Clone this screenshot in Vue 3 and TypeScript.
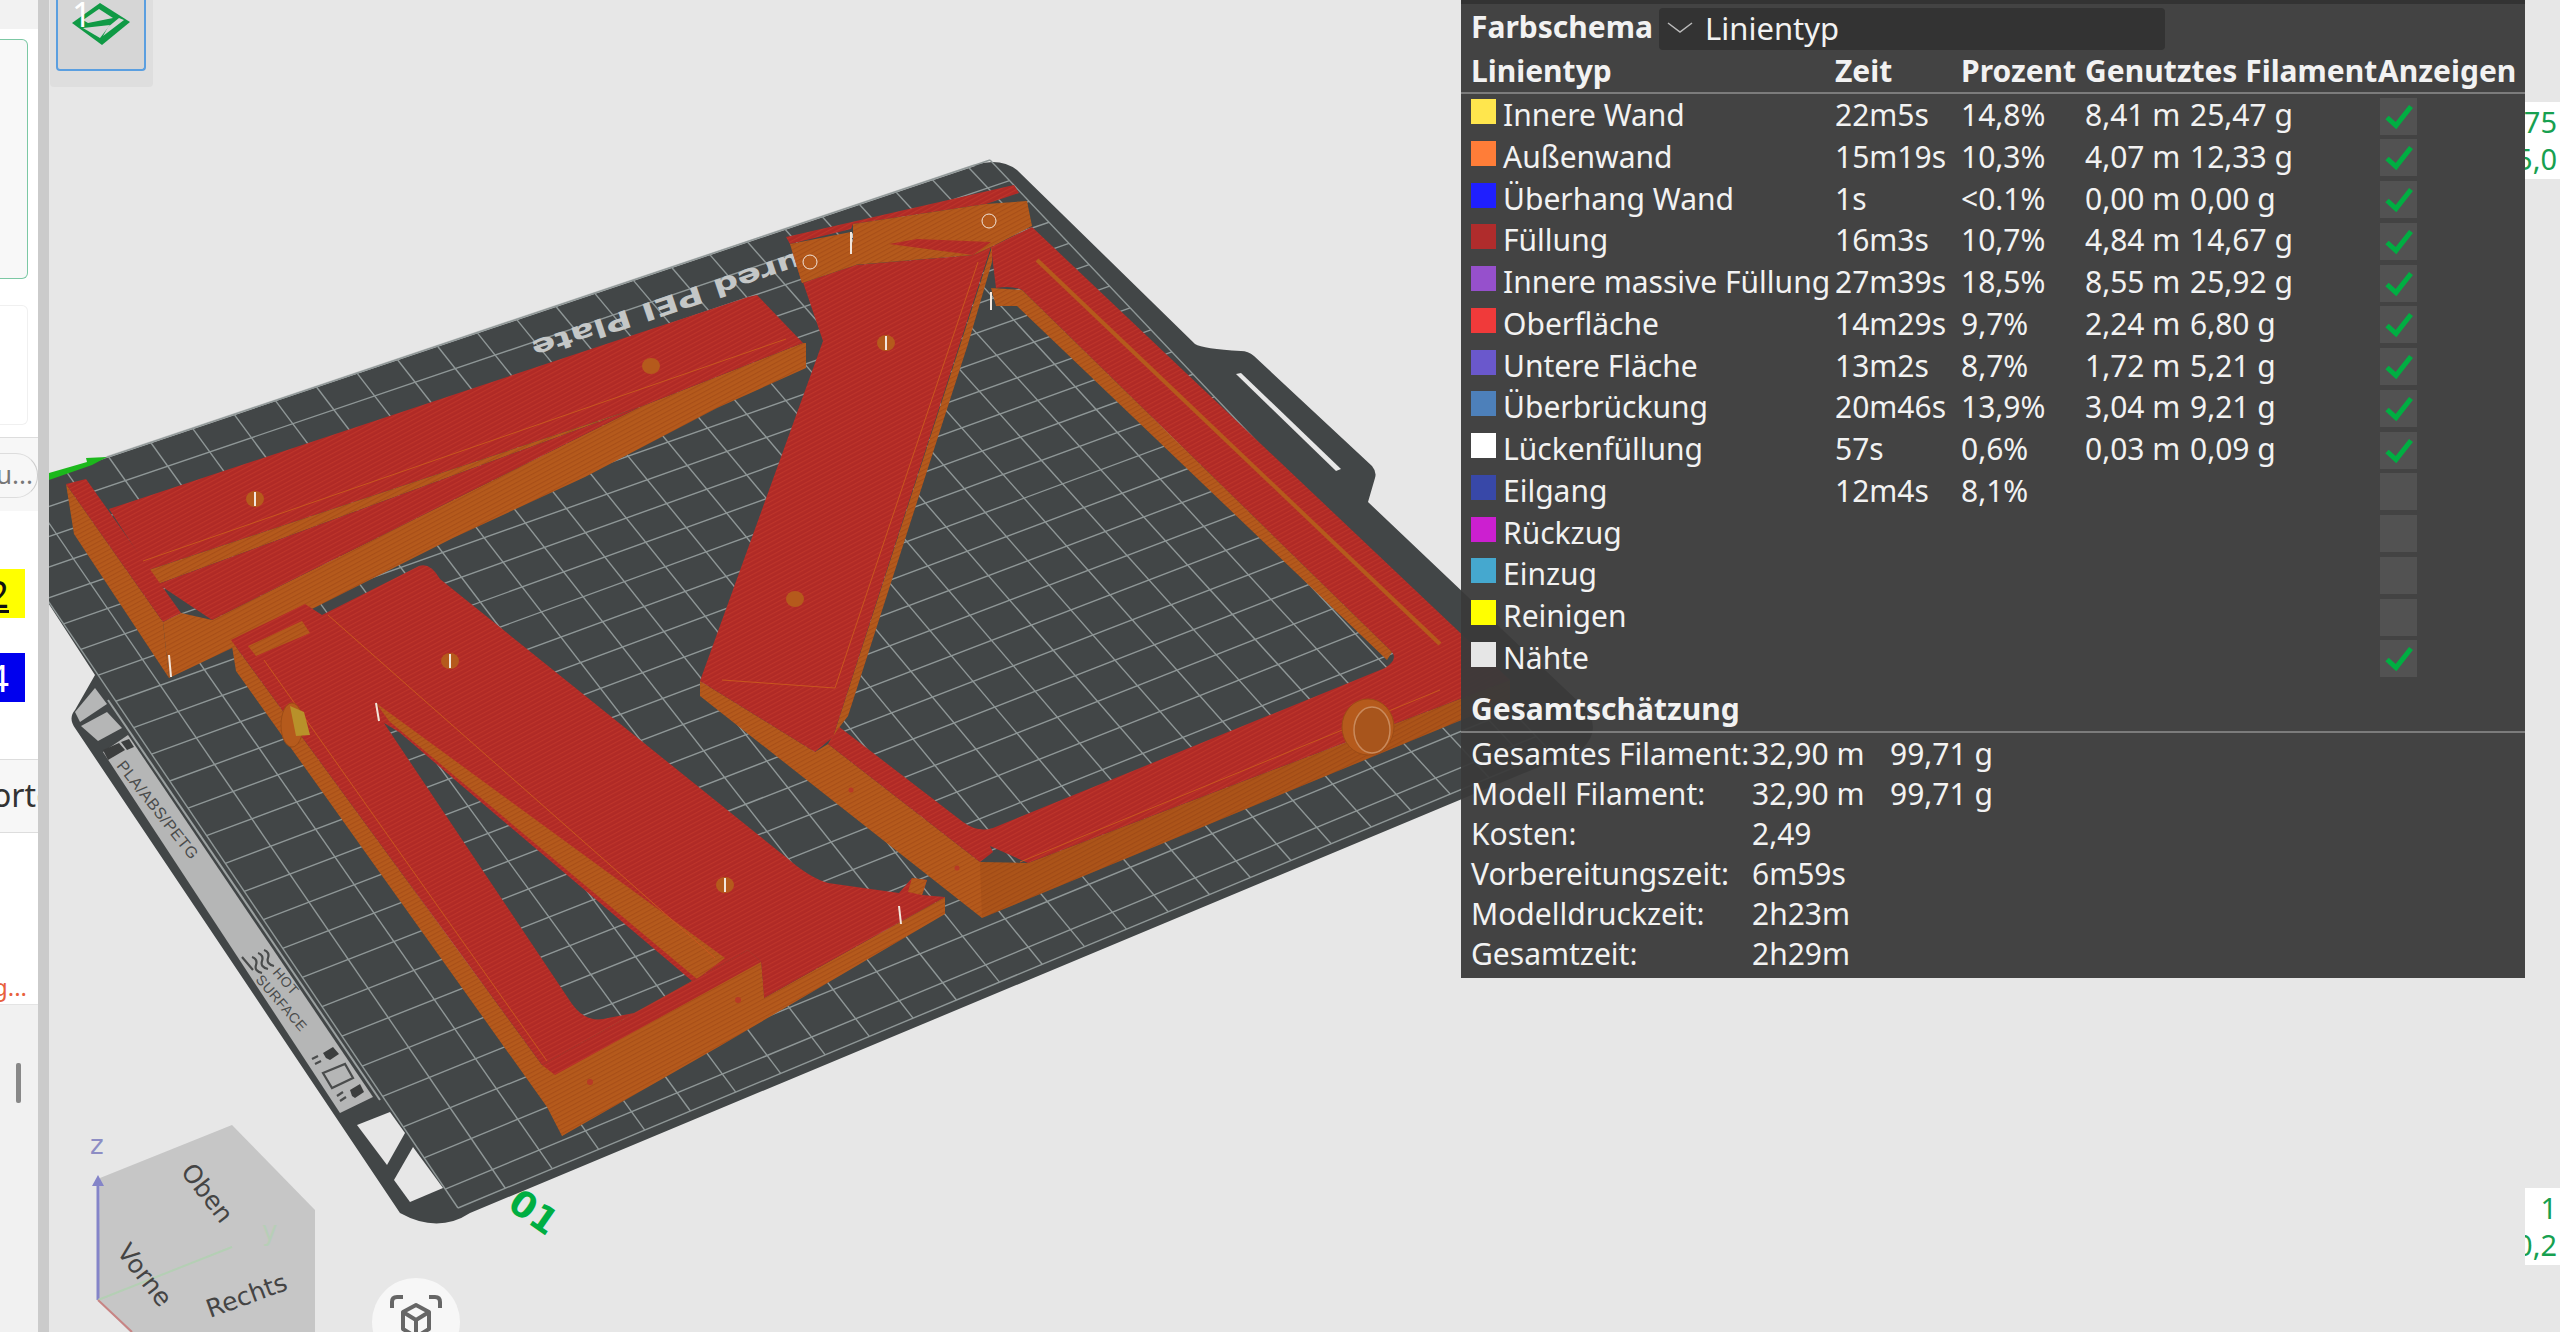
<script setup lang="ts">
type Row = { color: string; name: string; time?: string; pct?: string; len?: string; weight?: string; on: boolean }

const rows: Row[] = [
  { color: '#ffe64d', name: 'Innere Wand', time: '22m5s', pct: '14,8%', len: '8,41 m', weight: '25,47 g', on: true },
  { color: '#ff7d38', name: 'Außenwand', time: '15m19s', pct: '10,3%', len: '4,07 m', weight: '12,33 g', on: true },
  { color: '#1f1fff', name: 'Überhang Wand', time: '1s', pct: '<0.1%', len: '0,00 m', weight: '0,00 g', on: true },
  { color: '#b02c2c', name: 'Füllung', time: '16m3s', pct: '10,7%', len: '4,84 m', weight: '14,67 g', on: true },
  { color: '#9650cc', name: 'Innere massive Füllung', time: '27m39s', pct: '18,5%', len: '8,55 m', weight: '25,92 g', on: true },
  { color: '#f03a3a', name: 'Oberfläche', time: '14m29s', pct: '9,7%', len: '2,24 m', weight: '6,80 g', on: true },
  { color: '#6a58cc', name: 'Untere Fläche', time: '13m2s', pct: '8,7%', len: '1,72 m', weight: '5,21 g', on: true },
  { color: '#4d80ba', name: 'Überbrückung', time: '20m46s', pct: '13,9%', len: '3,04 m', weight: '9,21 g', on: true },
  { color: '#ffffff', name: 'Lückenfüllung', time: '57s', pct: '0,6%', len: '0,03 m', weight: '0,09 g', on: true },
  { color: '#3848a8', name: 'Eilgang', time: '12m4s', pct: '8,1%', on: false },
  { color: '#cc1fd0', name: 'Rückzug', on: false },
  { color: '#45a8cf', name: 'Einzug', on: false },
  { color: '#ffff00', name: 'Reinigen', on: false },
  { color: '#e6e6e6', name: 'Nähte', on: true },
]

const totals = [
  ['Gesamtes Filament:', '32,90 m', '99,71 g'],
  ['Modell Filament:', '32,90 m', '99,71 g'],
  ['Kosten:', '2,49', ''],
  ['Vorbereitungszeit:', '6m59s', ''],
  ['Modelldruckzeit:', '2h23m', ''],
  ['Gesamtzeit:', '2h29m', ''],
]

// bed corners on screen, top-left / top-right / bottom-right / bottom-left
const [x0, y0, x1, y1, x2, y2, x3, y3] = [-20, 500, 990, 160, 1551, 752, 458, 1208]
const den = (x1 - x2) * (y3 - y2) - (x3 - x2) * (y1 - y2)
const g = ((x0 - x1 + x2 - x3) * (y3 - y2) - (x3 - x2) * (y0 - y1 + y2 - y3)) / den
const h = ((x1 - x2) * (y0 - y1 + y2 - y3) - (x0 - x1 + x2 - x3) * (y1 - y2)) / den

function bed(u: number, v: number) {
  const w = g * u + h * v + 1
  return [
    ((x1 - x0 + g * x1) * u + (x3 - x0 + h * x3) * v + x0) / w,
    ((y1 - y0 + g * y1) * u + (y3 - y0 + h * y3) * v + y0) / w,
  ]
}

// 256 mm bed with a 10 mm grid, so the last cell on each axis is cut short
const gridLines: number[][] = []
for (const t of [...Array.from({ length: 26 }, (_, k) => k / 25.6), 1]) {
  gridLines.push([...bed(t, 0), ...bed(t, 1)])
  gridLines.push([...bed(0, t), ...bed(1, t)])
}

const holes = [
  [255, 499, true], [651, 366, false], [886, 343, true], [795, 599, false],
  [450, 661, true], [725, 885, true],
] as [number, number, boolean][]
</script>

<template>
  <div class="page">
    <aside class="side">
      <div class="side-top"></div>
      <div class="card green"></div>
      <div class="card faint"></div>
      <div class="side-tools"><span class="pill">u...</span></div>
      <div class="side-chips">
        <span class="chip yellow"><u>2</u></span>
        <span class="chip blue">4</span>
      </div>
      <div class="side-row">ortg</div>
      <div class="side-warn"><span>g...</span></div>
      <div class="side-foot"><span class="grip"></span></div>
    </aside>
    <div class="split"></div>

    <main class="view">
      <svg class="scene" viewBox="49 0 2511 1332" width="2511" height="1332">
        <defs>
          <pattern id="red" width="4" height="4" patternUnits="userSpaceOnUse" patternTransform="rotate(-28)">
            <rect width="4" height="4" fill="#b02a26" />
            <rect width="4" height="1.2" fill="#bd342a" />
          </pattern>
          <pattern id="org" width="4" height="4" patternUnits="userSpaceOnUse" patternTransform="rotate(-28)">
            <rect width="4" height="4" fill="#b55a1c" />
            <rect width="4" height="1.2" fill="#a84f18" />
          </pattern>
        </defs>

        <path class="plate" d="M30,483 L107,457 L975,165 Q1000,157 1017,170 L1195,344 Q1203,349 1241,351 Q1248,351 1254,356 L1372,466 Q1377,472 1375,478 L1368,502 L1582,705 Q1604,728 1582,749 L470,1213 Q438,1234 400,1213 L75,728 Q68,718 75,710 L95,675 L30,575 Z" />
        <line class="edge" x1="107" y1="457" x2="975" y2="165" />
        <polygon class="bg" points="1236,374 1241,373 1341,469 1336,471" />
        <polygon class="bg" points="357,1125 390,1112 405,1133 387,1165" />
        <polygon class="bg" points="394,1180 413,1147 443,1188 410,1202" />
        <polygon class="strip" points="75,712 95,688 107,704 80,722" />
        <polygon class="strip" points="81,726 107,712 122,728 98,741" />
        <polygon class="strip" points="103,752 128,735 373,1097 340,1113" />
        <line class="strip-line" x1="108" y1="700" x2="380" y2="1100" />

        <line v-for="(l, i) in gridLines" :key="i" class="grid" :x1="l[0]" :y1="l[1]" :x2="l[2]" :y2="l[3]" />

        <g class="print">
          <polygon points="103,750 119,743 125,750 108,760" />
          <polygon points="121,742 129,739 134,747 127,750" />
          <text class="hint" transform="translate(116,766) rotate(51.6)">PLA/ABS/PETG</text>
          <text class="hint small" transform="translate(272,973) rotate(49)">HOT</text>
          <text class="hint small" transform="translate(255,980) rotate(49)">SURFACE</text>
          <path class="hint-line" d="M242,957 L253,970 M252,957 q6,2 4,8 q-2,6 6,8 M258,953 q6,2 4,8 q-2,6 6,8 M264,950 q6,2 4,8 q-2,6 6,8" />
          <polygon points="323,1053 333,1047 339,1054 330,1060 326,1058" />
          <polygon points="350,1090 360,1084 364,1092 355,1098 352,1096" />
          <path class="hint-line" d="M323,1073 L345,1064 L353,1078 L332,1088 Z M312,1059 L318,1056 M315,1064 L321,1061 M337,1096 L343,1092 M340,1101 L346,1097" />
        </g>

        <text class="plate-name" text-anchor="end" transform="translate(530,342) rotate(161.4) scale(1.42,1)">Textured PEI Plate</text>
        <text class="plate-no" transform="translate(506,1208) rotate(35)">01</text>

        <polygon class="axis" points="49,473 87,462 86,458 107,457 92,465 49,480" />

        <!-- upper left bracket -->
        <polygon fill="url(#org)" points="806,343 806,368 717,408 585,477 453,538 316,607 230,649 169,678 163,622 181,613 212,620 640,407 803,343" />
        <polygon fill="url(#red)" points="109,509 748,297 757,295 803,343 640,407 631,410 149,570" />
        <polygon fill="url(#org)" points="631,410 149,570 158,584" />
        <polygon fill="url(#red)" points="631,410 158,584 212,620 640,407" />
        <polygon fill="url(#org)" points="66,484 74,534 169,678 163,622" />
        <polygon fill="url(#red)" points="66,484 86,479 181,613 163,622" />
        <polyline class="seam" points="143,561 786,339" />

        <!-- centre frame -->
        <polygon fill="url(#org)" points="700,681 700,696 982,918 1510,700 1510,680 1028,863 980,862 828,744 815,752" />
        <polygon class="shade" points="980,862 982,918 1510,700 1510,680 1028,863" />
        <path fill="url(#red)" d="M991,247 L1032,227 L1510,680 L1028,863 L990,846 L993,852 L980,862 L828,744 L838,726 L963,822 Q978,833 993,828 L1385,668 Q1398,660 1392,652 L1022,290 Q1012,285 996,288 Z" />
        <polygon fill="url(#org)" points="991,288 1022,290 1392,652 1387,660 1017,306 996,306" />
        <line class="band" x1="1037" y1="260" x2="1440" y2="644" />
        <polygon fill="url(#org)" points="992,247 992,262 968,344 848,716 838,729 828,744 833,737" />
        <polygon fill="url(#red)" points="790,244 802,283 856,265 973,255 991,247 833,737 815,752 700,681 823,341" />
        <polygon fill="url(#red)" points="786,237 1014,185 1019,193 986,204 853,224 851,229 790,244" />
        <polygon fill="url(#org)" points="790,244 851,232 856,265 802,283" />
        <polygon fill="url(#org)" points="853,224 986,204 1027,201 1032,226 991,247 973,255 853,265" />
        <polygon fill="url(#red)" points="889,244 917,239 991,242 973,255" />
        <polyline class="seam" points="978,262 835,688 722,680" />
        <polyline class="seam" points="1020,862 1440,690" />
        <ellipse class="knob" cx="1368" cy="727" rx="26" ry="28" />
        <ellipse class="knob-rim" cx="1372" cy="730" rx="18" ry="23" />
        <circle class="dot" cx="851" cy="790" r="2.5" />
        <circle class="dot" cx="957" cy="868" r="2.5" />

        <!-- lower left bracket -->
        <polygon fill="url(#org)" points="231,640 236,671 547,1107 562,1136 720,1046 945,914 945,897 764,998 761,962 748,950 542,1065" />
        <path fill="url(#red)" fill-rule="evenodd" d="M231,640 L305,604 L322,615 L419,566 Q430,562 440,579 L787,858 Q810,878 828,883 L899,893 L912,878 L927,880 L922,895 L945,897 L764,998 L761,962 L748,950 L542,1065 Z M384,723 L572,1004 Q585,1022 603,1019 L634,1013 L692,981 L475,797 L399,732 Z" />
        <polygon fill="url(#org)" points="376,703 725,958 697,979 389,721" />
        <polygon fill="url(#org)" points="555,1075 761,962 764,998 562,1136" />
        <polygon fill="url(#red)" points="542,1065 748,950 761,962 555,1075" />
        <polygon fill="url(#org)" points="248,646 302,621 310,633 256,656" />
        <polygon fill="url(#org)" points="908,892 912,878 927,880 922,895" />
        <polyline class="seam" points="264,660 547,1061" />
        <polyline class="seam" points="328,615 715,958" />
        <ellipse class="knob" cx="292" cy="725" rx="11" ry="22" />
        <polygon fill="#b8912a" points="290,706 304,712 310,735 296,736" />
        <circle class="dot" cx="738" cy="1000" r="3" />
        <circle class="dot" cx="590" cy="1082" r="3" />

        <g v-for="(p, i) in holes" :key="i">
          <ellipse class="hole" :cx="p[0]" :cy="p[1]" rx="9" ry="8" />
          <line v-if="p[2]" class="tick" :x1="p[0]" :y1="p[1] - 7" :x2="p[0]" :y2="p[1] + 7" />
        </g>
        <line class="tick" x1="169" y1="655" x2="171" y2="677" />
        <line class="tick" x1="851" y1="232" x2="851" y2="254" />
        <line class="tick" x1="991" y1="292" x2="991" y2="310" />
        <line class="tick" x1="376" y1="703" x2="379" y2="721" />
        <line class="tick" x1="899" y1="906" x2="901" y2="924" />
        <circle class="hole ring" cx="989" cy="221" r="7" />
        <circle class="hole ring" cx="810" cy="262" r="7" />

        <!-- nav cube -->
        <polygon class="cube" points="100,1178 232,1125 315,1210 315,1332 130,1332 98,1300" />
        <line class="axis-z" x1="98" y1="1300" x2="98" y2="1186" />
        <polygon class="axis-z-tip" points="98,1175 92,1186 104,1186" />
        <text class="axis-label z" x="90" y="1154">z</text>
        <line class="axis-y" x1="98" y1="1300" x2="232" y2="1247" />
        <text class="axis-label y" x="262" y="1240">y</text>
        <line class="axis-x" x1="98" y1="1300" x2="132" y2="1332" />
        <text class="cube-text" transform="translate(180,1172) rotate(52)">Oben</text>
        <text class="cube-text" transform="translate(116,1252) rotate(52)">Vorne</text>
        <text class="cube-text" transform="translate(210,1318) rotate(-20)">Rechts</text>
      </svg>

      <div class="tile">
        <div class="tile-sel">
          <svg class="tile-icon" viewBox="0 0 60 44" width="60" height="44">
            <path d="M0,20 L28,0 L58,19 L30,42 Z" fill="#109a45" />
            <polygon points="11,17 27,6 41,15 16,20" fill="#d6d6d6" />
            <polygon points="11,25 38,22 28,35" fill="#d6d6d6" />
            <polygon points="31,33 52,17 47,15 36,24" fill="#d6d6d6" />
          </svg>
          <span class="tile-no">1</span>
        </div>
      </div>

      <button class="scan">
        <svg viewBox="0 0 60 60" width="60" height="60">
          <path class="scan-line" d="M6,16 V10 Q6,5 11,5 H17 M43,5 H49 Q54,5 54,10 V16 M6,44 V50 Q6,55 11,55 H17 M43,55 H49 Q54,55 54,50 V44" />
          <path class="scan-line" d="M30,13 L43,20 V37 L30,45 L17,37 V20 Z M17,20 L30,28 L43,20 M30,28 V45" />
        </svg>
      </button>

      <section class="hud">
        <div class="hud-top">
          <strong>Farbschema</strong>
          <div class="combo">
            <svg viewBox="0 0 26 12" width="26" height="12"><path d="M1,1 L13,10 L25,1" fill="none" stroke="#bbb" stroke-width="1.5" /></svg>
            <span>Linientyp</span>
          </div>
        </div>
        <div class="row head">
          <span>Linientyp</span><span>Zeit</span><span>Prozent</span><span>Genutztes Filament</span><span>Anzeigen</span>
        </div>
        <div class="rule"></div>
        <div class="rows">
          <div v-for="r in rows" :key="r.name" class="row">
            <span class="name"><i class="swatch" :style="{ background: r.color }"></i>{{ r.name }}</span>
            <span>{{ r.time }}</span>
            <span>{{ r.pct }}</span>
            <span class="usage"><b>{{ r.len }}</b><b>{{ r.weight }}</b></span>
            <span class="box">
              <svg v-if="r.on" viewBox="0 0 37 37" width="37" height="37"><path d="M7,19.5 L16,27.5 L31,8.5" fill="none" stroke="#00ae42" stroke-width="5" /></svg>
            </span>
          </div>
        </div>
        <h3 class="sum-title">Gesamtschätzung</h3>
        <div class="rule"></div>
        <div class="sum">
          <div v-for="t in totals" :key="t[0]" class="sum-row">
            <span>{{ t[0] }}</span><span>{{ t[1] }}</span><span>{{ t[2] }}</span>
          </div>
        </div>
      </section>

      <div class="edge-note first"><span>75</span><span>5,0</span></div>
      <div class="edge-note second"><span>1</span><span>0,2</span></div>
    </main>
  </div>
</template>

<style scoped>
.page {
  display: flex;
  width: 2560px;
  height: 1332px;
  overflow: hidden;
  background: #e7e7e7;
  font-family: "Noto Sans", Roboto, sans-serif;
}
.side {
  width: 38px;
  display: flex;
  flex-direction: column;
  background: #fff;
  overflow: hidden;
}
.side-top {
  height: 29px;
  background: #f2f2f2;
  flex: none;
}
.card {
  width: 28px;
  flex: none;
  border-radius: 0 6px 6px 0;
  box-sizing: border-box;
}
.card.green {
  height: 240px;
  margin-top: 10px;
  border: 1px solid #7cc8a4;
  border-left: 0;
  background: #f8f8f8;
}
.card.faint {
  height: 120px;
  margin-top: 26px;
  border: 1px solid #f0f0f0;
  border-left: 0;
}
.side-tools {
  height: 73px;
  margin-top: 12px;
  flex: none;
  border-top: 1px solid #ddd;
  background: #f7f7f7;
  display: flex;
  align-items: center;
  justify-content: flex-end;
}
.pill {
  flex: none;
  width: 60px;
  height: 45px;
  box-sizing: border-box;
  border: 1px solid #ddd;
  border-right-color: #ccc;
  border-radius: 22px;
  margin-top: 2px;
  text-align: right;
  padding-right: 4px;
  font-size: 26px;
  line-height: 40px;
  color: #777;
}
.side-chips {
  height: 248px;
  flex: none;
  display: flex;
  flex-direction: column;
  gap: 35px;
  padding-top: 58px;
  box-sizing: border-box;
}
.chip {
  width: 25px;
  height: 49px;
  box-sizing: border-box;
  padding-right: 16px;
  display: flex;
  justify-content: flex-end;
  font-size: 38px;
  line-height: 49px;
  overflow: hidden;
}
.chip.yellow {
  background: #ffff00;
  color: #111;
}
.chip.blue {
  background: #0000ee;
  color: #fff;
}
.side-row {
  height: 74px;
  flex: none;
  box-sizing: border-box;
  border-top: 1px solid #ddd;
  border-bottom: 1px solid #ddd;
  background: #f7f7f7;
  font-size: 32px;
  line-height: 70px;
  color: #333;
  white-space: nowrap;
  margin-left: -8px;
  padding-left: 8px;
  text-indent: -8px;
}
.side-warn {
  height: 172px;
  flex: none;
  box-sizing: border-box;
  border-bottom: 1px solid #e4e4e4;
  color: #e8603c;
  font-size: 24px;
  display: flex;
  align-items: flex-end;
  line-height: 34px;
}
.side-warn span {
  margin-left: -7px;
}
.side-foot {
  flex: 1;
  background: #f1f1f1;
  padding: 58px 0 0 16px;
}
.grip {
  display: block;
  width: 5px;
  height: 40px;
  border-radius: 2px;
  background: #888;
}
.split {
  width: 11px;
  background: #cbcbcb;
  flex: none;
}
.view {
  position: relative;
  flex: 1;
}
.scene {
  position: absolute;
  left: 0;
  top: 0;
}
.plate {
  fill: #424647;
}
.edge {
  stroke: #c2c4c4;
  stroke-width: 2;
}
.bg {
  fill: #e7e7e7;
}
.strip {
  fill: #b5b6b6;
}
.strip-line {
  stroke: #9aa0a0;
  stroke-width: 2;
}
.grid {
  stroke: #8f9797;
  stroke-width: 1.4;
}
.hint {
  font-family: "Liberation Sans", sans-serif;
  font-size: 16px;
  letter-spacing: 0.5px;
  fill: #4a4c4c;
}
.hint.small {
  font-size: 14px;
}
.hint-line {
  fill: none;
  stroke: #4a4c4c;
  stroke-width: 2.2;
}
.print polygon {
  fill: #3c3e3e;
}
.plate-name {
  font-family: "DejaVu Sans", sans-serif;
  font-weight: 700;
  font-size: 25px;
  fill: #c4c7c7;
}
.plate-no {
  font-family: "DejaVu Sans", sans-serif;
  font-weight: 700;
  font-size: 36px;
  fill: #00ae42;
}
.axis {
  fill: #1cb81c;
}
.seam {
  fill: none;
  stroke: #c8571f;
  stroke-width: 1;
}
.band {
  stroke: #b55a1c;
  stroke-width: 4;
}
.shade {
  fill: #7a380e;
  opacity: 0.15;
}
.knob {
  fill: #b55a1c;
  stroke: #9c4c16;
}
.knob-rim {
  fill: #a8551c;
  stroke: #c98a5c;
  stroke-width: 1.5;
}
.hole {
  fill: #b55a1c;
}
.hole.ring {
  stroke: #f2e6dc;
  stroke-width: 1;
}
.dot {
  fill: #b83a26;
}
.tick {
  stroke: #f2e6dc;
  stroke-width: 2;
}
.cube {
  fill: #c6c6c6;
}
.axis-z {
  stroke: #8484c8;
  stroke-width: 3;
}
.axis-z-tip {
  fill: #8484c8;
}
.axis-y {
  stroke: #b4cfb4;
  stroke-width: 2;
}
.axis-x {
  stroke: #c88484;
  stroke-width: 2;
}
.axis-label {
  font-family: "DejaVu Sans", sans-serif;
  font-size: 26px;
}
.axis-label.z {
  fill: #8d8dc4;
}
.axis-label.y {
  fill: #b7ceb7;
}
.cube-text {
  font-family: "DejaVu Sans", sans-serif;
  font-size: 25px;
  fill: #444;
}
.tile {
  position: absolute;
  left: 1px;
  top: 0;
  width: 103px;
  height: 87px;
  background: #dedede;
  border-radius: 0 0 4px 4px;
}
.tile-sel {
  position: relative;
  margin-left: 6px;
  width: 90px;
  height: 71px;
  box-sizing: border-box;
  border: 2px solid #5b9fe0;
  border-top: 0;
  border-radius: 0 0 4px 4px;
  background: #d6d6d6;
  display: flex;
  justify-content: center;
  padding-top: 3px;
}
.tile-no {
  position: absolute;
  left: 14px;
  top: 0;
  font-size: 34px;
  line-height: 28px;
  color: #fff;
}
.tile-icon {
  margin-left: 2px;
}
.scan {
  position: absolute;
  left: 323px;
  top: 1278px;
  width: 88px;
  height: 88px;
  border: 0;
  padding: 14px;
  border-radius: 50%;
  background: #f7f7f7;
}
.scan-line {
  fill: none;
  stroke: #666;
  stroke-width: 4;
  stroke-linejoin: round;
}
.hud {
  position: absolute;
  left: 1412px;
  top: 0;
  width: 1064px;
  height: 978px;
  box-sizing: border-box;
  border-top: 4px solid #333;
  background: rgba(58, 58, 58, 0.95);
  color: #f2f2f2;
  font-size: 30px;
}
.hud-top {
  display: flex;
  align-items: center;
  height: 46px;
  padding: 3px 0 0 10px;
  box-sizing: border-box;
}
.hud-top strong {
  width: 188px;
  padding-bottom: 5px;
  font-weight: 700;
  flex: none;
}
.combo {
  display: flex;
  align-items: center;
  gap: 12px;
  width: 506px;
  height: 42px;
  box-sizing: border-box;
  padding: 0 0 2px 8px;
  border-radius: 4px;
  background: #333;
  font-size: 31px;
}
.row {
  display: grid;
  grid-template-columns: 364px 126px 124px 293px 1fr;
  align-items: center;
  height: 41.77px;
  padding-left: 10px;
  white-space: nowrap;
}
.row > span:not(.box) {
  padding-bottom: 3px;
}
.head {
  height: 40px;
  font-weight: 700;
}
.rule {
  height: 2px;
  background: #7c7c7c;
  margin-top: 2px;
}
.name {
  display: flex;
  align-items: center;
}
.swatch {
  width: 25px;
  height: 25px;
  margin: -6px 7px 0 0;
}
.usage {
  display: flex;
}
.usage b {
  font-weight: 400;
  width: 105px;
}
.box {
  width: 37px;
  height: 37px;
  margin-left: 2px;
  background: #525252;
}
.sum-title {
  margin: 12px 0 0;
  padding-left: 10px;
  height: 38px;
  line-height: 36px;
  font-size: 30px;
  font-weight: 700;
}
.sum {
  padding: 1px 0 0 10px;
}
.sum-row {
  display: grid;
  grid-template-columns: 281px 138px 1fr;
  height: 40px;
  line-height: 40px;
  white-space: nowrap;
}
.edge-note {
  position: absolute;
  left: 2476px;
  width: 35px;
  height: 77px;
  box-sizing: border-box;
  padding: 1px 3px 0 0;
  background: #fff;
  color: #17a050;
  font-size: 29px;
  display: flex;
  flex-direction: column;
  align-items: flex-end;
  overflow: hidden;
  white-space: nowrap;
  line-height: 37px;
}
.edge-note.first {
  top: 102px;
}
.edge-note.second {
  top: 1188px;
}
</style>
